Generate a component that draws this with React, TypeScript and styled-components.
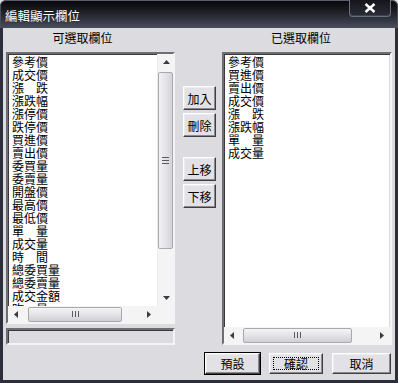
import React from 'react';
import styled, { createGlobalStyle, css } from 'styled-components';

const Global = createGlobalStyle`
  html, body { margin: 0; padding: 0; background: #dcdbdf; }
  body {
    width: 398px; height: 383px; overflow: hidden;
    font-family: "Noto Sans CJK TC", "Noto Sans CJK SC", "DejaVu Sans", sans-serif;
  }
  * { box-sizing: border-box; }
`;

const FACE = '#dcdbdf';
const FRAME = '#2c2e3a';

const Window = styled.div`
  width: 398px;
  height: 383px;
  display: flex;
  flex-direction: column;
  background: ${FRAME};
  border-radius: 6px 6px 0 0;
  overflow: hidden;
`;

const TitleBar = styled.div`
  height: 28px;
  flex: none;
  display: flex;
  align-items: flex-start;
  justify-content: space-between;
  padding: 0 6px 0 4px;
  background: linear-gradient(to bottom, #08090c 0%, #1b1c23 35%, #3a3d4b 80%, #4a4d5d 100%);
  border-top: 1px solid #5a5d6b;
  border-left: 1px solid #4a4d5a;
  border-right: 1px solid #4a4d5a;
  border-radius: 6px 6px 0 0;
`;

const Title = styled.span`
  margin-top: 8px;
  color: #ffffff;
  font-size: 12.5px;
  line-height: 14px;
  text-shadow: 0 0 1px rgba(0, 0, 0, 0.6);
`;

const CloseButton = styled.div`
  width: 42px;
  height: 17px;
  margin-top: -1px;
  display: flex;
  align-items: center;
  justify-content: center;
  background: linear-gradient(to bottom, #15161c, #2b2d37);
  border: 1px solid #6c6f7d;
  border-top: none;
  border-radius: 0 0 4px 4px;
  box-shadow: inset 0 -1px 0 #3e414e;
`;

const Body = styled.div`
  flex: 1;
  margin: 0 3px 3px 3px;
  background: ${FACE};
  display: flex;
  flex-direction: column;
  padding: 0 3px;
`;

const Headers = styled.div`
  height: 24px;
  display: grid;
  grid-template-columns: 169px 47px 170px;
`;

const HeaderLabel = styled.div<{ $pr: number }>`
  font-size: 12px;
  line-height: 14px;
  padding-top: 3px;
  padding-right: ${p => p.$pr}px;
  text-align: center;
  color: #000;
`;

const Main = styled.div`
  height: 293px;
  display: grid;
  grid-template-columns: 169px 47px 170px;
`;

const LeftCol = styled.div`
  display: flex;
  flex-direction: column;
  gap: 4px;
`;

const sunken = css`
  border: 2px solid;
  border-color: #6e6e72 #f4f4f6 #f4f4f6 #6e6e72;
  box-shadow: inset 1px 1px 0 #3a3a3e, inset -1px -1px 0 #dcdbdf;
`;

const ListBox = styled.div<{ $h: number; $vscroll?: boolean }>`
  ${sunken};
  height: ${p => p.$h}px;
  background: #fff;
  display: grid;
  grid-template-columns: 1fr ${p => (p.$vscroll ? '16px' : '0px')};
  grid-template-rows: 1fr 16px;
  overflow: hidden;
`;

const Items = styled.div`
  overflow: hidden;
  padding: 1px 0 0 4px;
`;

const Item = styled.div`
  font-size: 12px;
  line-height: 13px;
  height: 13px;
  color: #000;
  white-space: nowrap;
`;

const Field = styled.div`
  ${sunken};
  height: 17px;
  background: ${FACE};
`;

const VScroll = styled.div`
  display: flex;
  flex-direction: column;
  background: #f4f4f4;
  border-left: 1px solid #ececec;
`;

const HScroll = styled.div`
  display: flex;
  background: #f4f4f4;
  grid-column: 1 / 2;
`;

const Corner = styled.div`
  background: #f4f4f4;
`;

const Arrow = styled.div`
  width: 16px;
  height: 16px;
  flex: none;
  display: flex;
  align-items: center;
  justify-content: center;
`;

const Track = styled.div<{ $dir: 'v' | 'h' }>`
  flex: 1;
  display: flex;
  flex-direction: ${p => (p.$dir === 'v' ? 'column' : 'row')};
  align-items: ${p => (p.$dir === 'v' ? 'center' : 'center')};
`;

const Thumb = styled.div<{ $dir: 'v' | 'h'; $offset: number; $len: number }>`
  flex: none;
  display: flex;
  align-items: center;
  justify-content: center;
  border: 1px solid #a9a9ad;
  border-radius: 2px;
  ${p =>
    p.$dir === 'v'
      ? css`
          width: 15px;
          height: ${p.$len}px;
          margin-top: ${p.$offset}px;
          background: linear-gradient(to right, #f2f2f4, #e4e4e8 50%, #d4d4d8);
        `
      : css`
          height: 15px;
          width: ${p.$len}px;
          margin-left: ${p.$offset}px;
          background: linear-gradient(to bottom, #f4f4f6, #e4e4e8 50%, #d0d0d4);
        `}
`;

const Grip = styled.div<{ $dir: 'v' | 'h' }>`
  display: flex;
  flex-direction: ${p => (p.$dir === 'v' ? 'column' : 'row')};
  gap: 1px;
  & > span {
    display: block;
    background: #5a5a60;
    ${p => (p.$dir === 'v' ? 'width: 7px; height: 1px; margin: 0.5px 0;' : 'width: 1px; height: 6px; margin: 0 0.5px;')}
  }
`;

const MidCol = styled.div`
  display: flex;
  flex-direction: column;
  align-items: center;
  padding-top: 34px;
  padding-left: 2px;
`;

const BtnGroup = styled.div<{ $mt?: number }>`
  display: flex;
  flex-direction: column;
  gap: 3px;
  margin-top: ${p => p.$mt ?? 0}px;
`;

const Button = styled.div<{ $w: number; $h: number; $default?: boolean; $focus?: boolean }>`
  width: ${p => p.$w}px;
  height: ${p => p.$h}px;
  display: flex;
  align-items: center;
  justify-content: center;
  font-size: 12px;
  line-height: 13px;
  color: #000;
  background: #e2e1e5;
  border: 1px solid;
  border-color: #ffffff #404044 #404044 #ffffff;
  box-shadow: inset -1px -1px 0 #8a8a8e, inset 1px 1px 0 #ececee;
  position: relative;
  ${p =>
    p.$default &&
    css`
      outline: 1px solid #000;
    `}
  ${p =>
    p.$focus &&
    css`
      &::after {
        content: '';
        position: absolute;
        inset: 3px;
        border: 1px dotted #000;
      }
    `}
`;

const Footer = styled.div`
  display: flex;
  justify-content: flex-end;
  gap: 9px;
  margin-top: 8px;
  padding-right: 1px;
`;

const Tri = ({ dir }: { dir: 'up' | 'down' | 'left' | 'right' }) => {
  const pts = {
    up: '0,4 3.5,0 7,4',
    down: '0,0 7,0 3.5,4',
    left: '4,0 4,7 0,3.5',
    right: '0,0 0,7 4,3.5',
  }[dir];
  const w = dir === 'up' || dir === 'down' ? 7 : 4;
  const h = dir === 'up' || dir === 'down' ? 4 : 7;
  return (
    <svg width={w} height={h} viewBox={`0 0 ${w} ${h}`}>
      <polygon points={pts} fill="#3a3a40" />
    </svg>
  );
};

const VBar = ({ offset, len }: { offset: number; len: number }) => (
  <VScroll>
    <Arrow>
      <Tri dir="up" />
    </Arrow>
    <Track $dir="v">
      <Thumb $dir="v" $offset={offset} $len={len}>
        <Grip $dir="v">
          <span />
          <span />
          <span />
        </Grip>
      </Thumb>
    </Track>
    <Arrow>
      <Tri dir="down" />
    </Arrow>
  </VScroll>
);

const HBar = ({ offset, len }: { offset: number; len: number }) => (
  <HScroll>
    <Arrow>
      <Tri dir="left" />
    </Arrow>
    <Track $dir="h">
      <Thumb $dir="h" $offset={offset} $len={len}>
        <Grip $dir="h">
          <span />
          <span />
          <span />
        </Grip>
      </Thumb>
    </Track>
    <Arrow>
      <Tri dir="right" />
    </Arrow>
  </HScroll>
);

const available = [
  '參考價', '成交價', '漲　跌', '漲跌幅', '漲停價', '跌停價', '買進價', '賣出價',
  '委買量', '委賣量', '開盤價', '最高價', '最低價', '單　量', '成交量', '時　間',
  '總委買量', '總委賣量', '成交金額', '昨　量',
];

const selected = ['參考價', '買進價', '賣出價', '成交價', '漲　跌', '漲跌幅', '單　量', '成交量'];

export default function App() {
  return (
    <>
      <Global />
      <Window>
        <TitleBar>
          <Title>編輯顯示欄位</Title>
          <CloseButton>
            <svg width="12" height="10" viewBox="0 0 12 10">
              <path d="M1.5 1 L10.5 9 M10.5 1 L1.5 9" stroke="#fff" strokeWidth="2.4" />
            </svg>
          </CloseButton>
        </TitleBar>
        <Body>
          <Headers>
            <HeaderLabel $pr={16}>可選取欄位</HeaderLabel>
            <div />
            <HeaderLabel $pr={12}>已選取欄位</HeaderLabel>
          </Headers>
          <Main>
            <LeftCol>
              <ListBox $h={272} $vscroll>
                <Items>
                  {available.map(t => (
                    <Item key={t}>{t}</Item>
                  ))}
                </Items>
                <VBar offset={2} len={177} />
                <HBar offset={4} len={94} />
                <Corner />
              </ListBox>
              <Field />
            </LeftCol>
            <MidCol>
              <BtnGroup>
                <Button $w={33} $h={24}>加入</Button>
                <Button $w={33} $h={24}>刪除</Button>
              </BtnGroup>
              <BtnGroup $mt={20}>
                <Button $w={33} $h={24}>上移</Button>
                <Button $w={33} $h={24}>下移</Button>
              </BtnGroup>
            </MidCol>
            <ListBox $h={293}>
              <Items>
                {selected.map(t => (
                  <Item key={t}>{t}</Item>
                ))}
              </Items>
              <div />
              <HBar offset={3} len={109} />
              <div />
            </ListBox>
          </Main>
          <Footer>
            <Button $w={55} $h={21} $default>預設</Button>
            <Button $w={54} $h={21} $focus>確認</Button>
            <Button $w={59} $h={21}>取消</Button>
          </Footer>
        </Body>
      </Window>
    </>
  );
}
